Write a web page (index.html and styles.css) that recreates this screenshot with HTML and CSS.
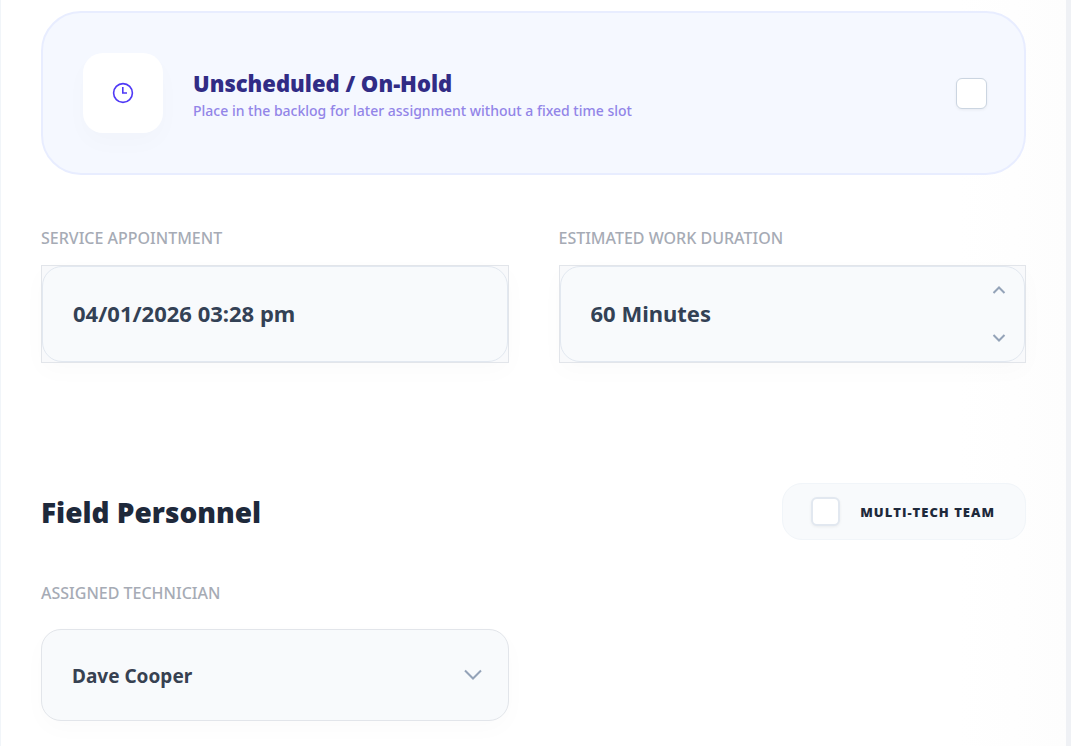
FILE: index.html
```html
<!DOCTYPE html>
<html lang="en">
<head>
    <meta charset="UTF-8">
    <meta name="viewport" content="width=device-width, initial-scale=1.0">
    <title>Schedule Job</title>
    <link rel="stylesheet" href="styles.css">
</head>
<body>
    <form class="panel">
        <!-- Backlog option -->
        <label class="hold-card">
            <span class="hold-icon">
                <svg width="22" height="22" viewBox="0 0 22 22" fill="none" stroke="currentColor">
                    <circle cx="11" cy="11" r="9.4" stroke-width="1.6"/>
                    <path d="M10.800 5v6h4.200" stroke-width="1.6"/>
                </svg>
            </span>
            <span class="hold-text">
                <span class="hold-title">Unscheduled / On-Hold</span>
                <span class="hold-note">Place in the backlog for later assignment without a fixed time slot</span>
            </span>
            <input type="checkbox" class="check check-large" name="on_hold">
        </label>

        <!-- Time and duration -->
        <div class="grid">
            <div class="field">
                <label class="field-label" for="appointment">SERVICE APPOINTMENT</label>
                <div class="field-box">
                    <input type="text" class="field-input" id="appointment" value="04/01/2026 03:28 pm">
                </div>
            </div>
            <div class="field">
                <label class="field-label" for="duration">ESTIMATED WORK DURATION</label>
                <div class="field-box">
                    <input type="text" class="field-input" id="duration" value="60 Minutes">
                    <div class="stepper">
                        <button type="button" class="step" aria-label="Increase">
                            <svg width="14" height="8" viewBox="0 0 14 8"><path d="M1.5 7 7 1.5 12.5 7"/></svg>
                        </button>
                        <button type="button" class="step" aria-label="Decrease">
                            <svg width="14" height="8" viewBox="0 0 14 8"><path d="M1.5 1 7 6.5 12.5 1"/></svg>
                        </button>
                    </div>
                </div>
            </div>
        </div>

        <!-- Technicians -->
        <div class="section-head">
            <h2>Field Personnel</h2>
            <label class="team-toggle">
                <input type="checkbox" class="check" name="multi_tech">
                <span>MULTI-TECH TEAM</span>
            </label>
        </div>

        <div class="grid">
            <div class="field">
                <label class="field-label" for="technician">ASSIGNED TECHNICIAN</label>
                <div class="select-box">
                    <select class="select" id="technician">
                        <option>Dave Cooper</option>
                    </select>
                    <svg class="select-arrow" width="20" height="12" viewBox="0 0 20 12"><path d="M2 1.5 10 9.5 18 1.5"/></svg>
                </div>
            </div>
        </div>
    </form>
</body>
</html>
```

FILE: styles.css
```css
* {
    box-sizing: border-box;
}
body {
    margin: 0;
    padding-right: 5px;
    background-color: #eff1f5;
    font-family: "Noto Sans", "Open Sans", sans-serif;
    color: #1e293b;
}
.panel {
    min-height: 100vh;
    padding: 11px 40px 24px;
    border-left: 1px solid #f1f5f9;
    background: linear-gradient(to right, #fff 90%, #fdfdfd);
}
.hold-card {
    display: flex;
    align-items: center;
    gap: 30px;
    padding: 40px 37px 40px 40px;
    border: 2px solid #e8edff;
    border-radius: 40px;
    background-color: #f5f8ff;
    cursor: pointer;
}
.hold-icon {
    display: flex;
    align-items: center;
    justify-content: center;
    flex: none;
    width: 80px;
    height: 80px;
    border-radius: 20px;
    background-color: #fff;
    color: #4f39f6;
    box-shadow: 0 10px 24px rgba(0, 0, 0, 0.02);
}
.hold-text {
    display: flex;
    flex-direction: column;
    flex: 1;
    padding-top: 6px;
}
.hold-title {
    font-family: "Open Sans", sans-serif;
    font-size: 22px;
    line-height: 30px;
    font-weight: 800;
    color: #312c85;
}
.hold-note {
    font-size: 14px;
    line-height: 26px;
    font-weight: 500;
    color: #9285e8;
}
.check {
    appearance: none;
    flex: none;
    width: 29px;
    height: 29px;
    margin: 0;
    border: 2px solid #e2e8f0;
    border-radius: 6px;
    background-color: #fff;
    box-shadow: 0 1px 3px rgba(0, 0, 0, 0.06);
    cursor: pointer;
}
.check-large {
    width: 31px;
    height: 31px;
    border: 1px solid #cbd5e1;
}
.check:checked {
    background-color: #4f39f6;
}
.grid {
    display: grid;
    grid-template-columns: 1fr 1fr;
    gap: 50px;
}
.hold-card + .grid {
    margin-top: 51px;
}
.field-label {
    display: block;
    margin-bottom: 15px;
    font-size: 16px;
    line-height: 24px;
    font-weight: 500;
    color: #a6abb5;
}
.field-box {
    display: flex;
    position: relative;
    height: 98px;
    border: 1px solid #e2e5ea;
    background-color: #f8f9fb;
    box-shadow: 0 8px 24px rgba(0, 0, 0, 0.02);
}
.field-input {
    width: 100%;
    padding: 0 30px 2px;
    border: 1px solid #e2e8f0;
    border-radius: 20px;
    background-color: #f8fafc;
    font-family: inherit;
    font-size: 22px;
    font-weight: 700;
    color: #334155;
}
.stepper {
    display: flex;
    position: absolute;
    top: 0;
    right: 0;
    bottom: 0;
    flex-direction: column;
    width: 52px;
}
.step {
    display: flex;
    flex: 1;
    align-items: center;
    justify-content: center;
    padding: 0;
    border: none;
    background: none;
    cursor: pointer;
}
.step path,
.select-arrow path {
    fill: none;
    stroke: #94a3b8;
    stroke-width: 2;
}
.section-head {
    display: flex;
    align-items: center;
    justify-content: space-between;
    margin: 120px 0 41px;
}
h2 {
    margin: 0;
    font-family: "Open Sans", sans-serif;
    font-size: 28px;
    line-height: 40px;
    font-weight: 800;
}
.team-toggle {
    display: flex;
    align-items: center;
    gap: 20px;
    height: 57px;
    padding: 0 30px 0 28px;
    border: 1px solid #f1f5f9;
    border-radius: 20px;
    background-color: #f8fafc;
    font-family: "Open Sans", sans-serif;
    font-size: 13px;
    font-weight: 800;
    letter-spacing: 1px;
    cursor: pointer;
}
.select-box {
    position: relative;
    margin-top: 24px;
}
.select {
    display: block;
    appearance: none;
    width: 100%;
    height: 92px;
    padding: 2px 60px 0 30px;
    border: 1px solid #e2e5ea;
    border-radius: 20px;
    background-color: #f8fafc;
    box-shadow: 0 8px 24px rgba(0, 0, 0, 0.02);
    font-family: inherit;
    font-size: 19px;
    font-weight: 700;
    color: #374151;
}
.select-arrow {
    position: absolute;
    top: 40px;
    right: 26px;
    pointer-events: none;
}
```
